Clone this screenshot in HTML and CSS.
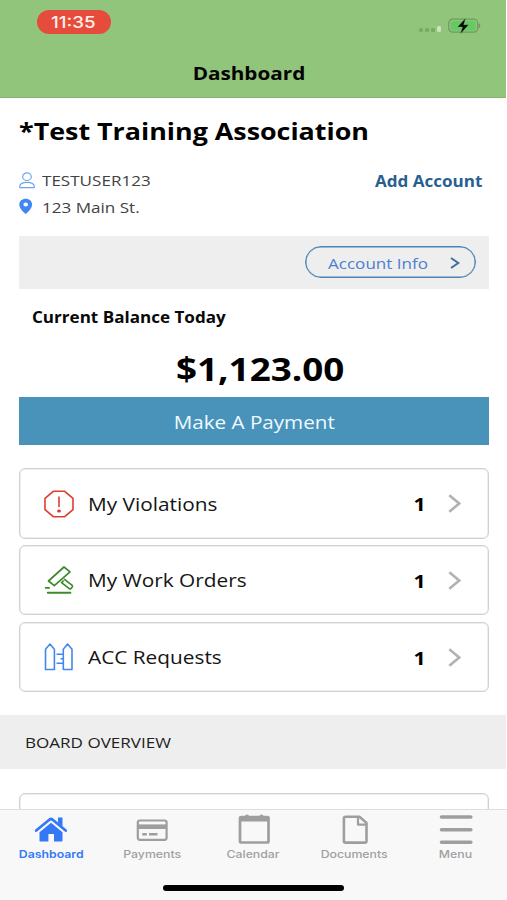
FILE: index.html
```html
<!DOCTYPE html>
<html lang="en">
<head>
<meta charset="utf-8">
<meta name="viewport" content="width=device-width">
<title>Dashboard</title>
<link rel="stylesheet" href="styles.css">
</head>
<body>
<div class="screen">
  <header class="header">
    <div class="status">
      <div class="time"><span class="wide">11:35</span></div>
      <div class="indicators">
        <span class="signal"><i></i><i></i><i></i><i class="on"></i></span>
        <svg class="battery" width="33" height="16" viewBox="0 0 33 16">
          <rect x=".7" y="1.2" width="29" height="13" rx="4" fill="#91c57b" stroke="#6f9a5e" stroke-width="1.2"/>
          <rect x="2.7" y="3" width="25" height="9.5" rx="2.6" fill="#65c966"/>
          <path d="M31 5.8q1.8 2 0 4z" fill="#6f9a5e" stroke="#6f9a5e"/>
          <path d="M17.700 0 9.500 9h5l-2.200 7L20.700 6.700h-5z" fill="#050805" stroke="#91c57b" stroke-width=".3"/>
        </svg>
      </div>
    </div>
    <h1 class="nav-title"><span class="wide mid">Dashboard</span></h1>
  </header>

  <main class="content">
    <h2 class="assoc"><span class="wide">*Test Training Association</span></h2>
    <div class="line">
      <svg class="line-icon" width="16" height="17" viewBox="0 0 16 17" fill="none" stroke="#6ea3f2" stroke-width="1.2"><ellipse cx="8" cy="4.7" rx="4.3" ry="3.8"/><path d="M.8 15.6v-1.3c0-2.500 2.600-4 7.200-4s7.200 1.500 7.200 4v1.300z" stroke-linejoin="round"/></svg>
      <span class="wide slim">TESTUSER123</span>
      <a class="add"><span class="wide slim right">Add Account</span></a>
    </div>
    <div class="line">
      <svg class="line-icon" width="16" height="17" viewBox="0 0 16 17"><path fill="#4287f0" fill-rule="evenodd" d="M6.700.8C3 .8.300 3.200.300 6.500c0 3.800 4 7.500 6.400 9.600 2.400-2.100 6.400-5.800 6.400-9.600C13.100 3.200 10.400.800 6.700.800zM6.700 4.400a2.300 2 0 1 1 0 4 2.300 2 0 1 1 0-4z"/></svg>
      <span class="wide slim">123 Main St.</span>
    </div>

    <div class="info-bar">
      <a class="info-button">
        <span class="wide slim">Account Info</span>
        <svg width="10" height="12" viewBox="0 0 10 12" fill="none" stroke="#3f6d9f" stroke-width="2"><path d="M1 1l7.300 5L1 11"/></svg>
      </a>
    </div>

    <div class="balance-label"><span class="wide slim">Current Balance Today</span></div>
    <div class="balance"><span class="wide mid">$1,123.00</span></div>
    <a class="pay"><span class="wide slim mid">Make A Payment</span></a>

    <div class="cards">
      <div class="card">
        <svg class="card-icon" width="32" height="30" viewBox="0 0 32 30" fill="none" stroke="#e23b30" stroke-width="1.600"><path d="M10.300 2.300h11.400l8.300 7.100v11.200l-8.300 7.100H10.300L2 20.600V9.400z"/><path d="M16 7.500v10.600"/><ellipse cx="16" cy="22" rx="2" ry="1.600" fill="#e23b30" stroke="none"/></svg>
        <span class="wide">My Violations</span><b class="count"><span class="wide right">1</span></b>
        <svg class="chev" width="13" height="19" viewBox="0 0 13 19"><path d="M1.300 1.300l9.900 8.200-9.900 8.200"/></svg>
      </div>
      <div class="card">
        <svg class="card-icon" width="32" height="30" viewBox="0 0 32 30" fill="none" stroke="#3b8a2b" stroke-width="1.700" stroke-linejoin="round" stroke-linecap="round"><path d="M21 2l6 4.800-15.700 13.900-5.800-4.700z"/><path d="M18.600 17.600l7.300 5.800c.7.600 1.600.5 2.200-.1l1-1.100c.6-.7.500-1.400-.2-2l-7.400-5.900M18.600 17.600l1.500-1.500M2.600 22.800h3.600"/><path d="M4.800 27.800h22.600" stroke-width="1.900"/></svg>
        <span class="wide">My Work Orders</span><b class="count"><span class="wide right">1</span></b>
        <svg class="chev" width="13" height="19" viewBox="0 0 13 19"><path d="M1.300 1.300l9.900 8.200-9.900 8.200"/></svg>
      </div>
      <div class="card">
        <svg class="card-icon" width="32" height="30" viewBox="0 0 32 30" fill="none" stroke="#4287f0" stroke-width="1.600" stroke-linejoin="round"><path d="M7 2l4.400 5.200V27.500H2.500V7.200zM24.600 2L29 7.200v20.300h-8.700V7.200zM13.500 12.300h6.800M13.500 21.300h6.800M17.500 16.800h2.800"/></svg>
        <span class="wide">ACC Requests</span><b class="count"><span class="wide right">1</span></b>
        <svg class="chev" width="13" height="19" viewBox="0 0 13 19"><path d="M1.300 1.300l9.900 8.200-9.900 8.200"/></svg>
      </div>
    </div>

    <h3 class="section"><span class="wide slim">BOARD OVERVIEW</span></h3>
    <div class="cards"><div class="card"></div></div>
  </main>

  <footer class="footer">
    <nav class="tabs">
      <a class="tab active">
        <svg width="34" height="32" viewBox="0 0 34 32"><path fill="#3478f6" d="M17 9.800L28.500 19.300v8.200c0 .6-.4 1-1 1H20v-7.600h-5.600v7.600H6.500c-.7 0-1-.4-1-1v-8.200z"/><path d="M2.200 17.500L15.600 6.500q1.400-1 2.800 0L31.700 17.500" fill="none" stroke="#3478f6" stroke-width="2.800" stroke-linecap="round"/><path fill="#3478f6" d="M24 4.500h4.500v9L24 9.800z"/></svg>
        <span class="wide mid">Dashboard</span>
      </a>
      <a class="tab">
        <svg width="34" height="32" viewBox="0 0 34 32"><rect x="2.800" y="7.500" width="28.800" height="19.300" rx="2" fill="none" stroke="#9e9e9e" stroke-width="2.200"/><path d="M3 13.700h28.500" stroke="#9e9e9e" stroke-width="4.600"/><path d="M7.300 21.300h4.500M14 21.300h8.500" stroke="#9e9e9e" stroke-width="2.400"/></svg>
        <span class="wide mid">Payments</span>
      </a>
      <a class="tab">
        <svg width="34" height="32" viewBox="0 0 34 32"><rect x="3" y="4" width="28.500" height="25.500" rx="1.500" fill="none" stroke="#9e9e9e" stroke-width="2.700"/><path d="M2.300 3.500h30v5h-30z" fill="#9e9e9e"/><path d="M10 4v-.5M24.500 4v-.5" stroke="#9e9e9e" stroke-width="4" stroke-linecap="round"/></svg>
        <span class="wide mid">Calendar</span>
      </a>
      <a class="tab">
        <svg width="34" height="32" viewBox="0 0 34 32" fill="none" stroke="#9e9e9e" stroke-width="2.600" stroke-linejoin="round"><path d="M7.500 3.700h14l7 6.200V28c0 1-.6 1.600-1.600 1.600H7.500c-1 0-1.600-.6-1.600-1.600V5.300c0-1 .6-1.600 1.600-1.600z"/><path d="M20 4v7.600h8.200" stroke-width="2.200"/></svg>
        <span class="wide mid">Documents</span>
      </a>
      <a class="tab">
        <svg width="34" height="32" viewBox="0 0 34 32" stroke="#9e9e9e" stroke-width="3.600" stroke-linecap="round"><path d="M2.500 4h29.300M2.500 16.700h29.300M2.500 29.300h29.300"/></svg>
        <span class="wide mid">Menu</span>
      </a>
    </nav>
    <div class="home-bar"></div>
  </footer>
</div>
</body>
</html>
```
FILE: styles.css
```css
* { box-sizing: border-box; }
body { margin: 0; background: #fff; color: #151515; font-family: "Open Sans", sans-serif; }
h1, h2, h3 { margin: 0; }
svg { display: block; flex: none; }

.screen { height: 900px; display: flex; flex-direction: column; overflow: hidden; }

/* Horizontally extended lettering */
.wide { display: inline-block; transform: scaleX(1.15); transform-origin: left center; white-space: nowrap; }
.wide.slim { transform: scaleX(1.115); }
.wide.mid { transform-origin: center; }
.wide.right { transform-origin: right center; }

.header { height: 97.5px; flex: none; margin-right: 1px; background: #91c57b; border-bottom: 1px solid #86b572; }
.status { height: 50px; display: flex; justify-content: space-between; padding: 10px 25px 0 37px; }
.time { width: 74px; height: 24px; border-radius: 12px; background: #e64c3c; color: #fff0ea; font: 500 16.300px/24px Inter, sans-serif; padding-left: 13.5px; }
.indicators { display: flex; align-items: flex-start; gap: 7px; padding-top: 7.500px; }
.signal { display: flex; align-items: flex-end; gap: 2px; height: 14px; }
.signal i { width: 4px; height: 3.500px; border-radius: 1.500px; background: #79a966; }
.signal i.on { height: 6px; background: #c8e5bb; }
.nav-title { height: 47px; margin-left: -8px; text-align: center; color: #030303; font-size: 18px; line-height: 47px; }

.content { flex: 1; min-height: 0; overflow: hidden; }
.assoc { height: 69.500px; padding-left: 19px; color: #000; font-size: 23.350px; line-height: 66px; }
.line { display: flex; align-items: center; height: 26.500px; padding: 0 25px 0 19px; color: #424242; font-size: 15.300px; line-height: 20px; }
.line-icon { margin-right: 6.500px; }
.add { margin-left: auto; padding-top: 1px; color: #285f90; font-weight: 700; }

.info-bar { display: flex; justify-content: flex-end; align-items: center; height: 53.500px; margin: 15.600px 18px 0 19px; padding-right: 13px; background: #eee; }
.info-button { display: flex; justify-content: space-between; align-items: center; width: 171px; height: 32px; padding: 1px 15px 0 22px; border: 1px solid #4b84b5; box-shadow: inset 0 0 0 .5px #4b84b5; border-radius: 16px; color: #4d80cc; font-size: 15.300px; }

.balance-label { height: 57px; padding-left: 31.500px; color: #080808; font-size: 15.300px; font-weight: 700; line-height: 57px; }
.balance { height: 51px; padding-left: 13px; text-align: center; color: #000; font-size: 32px; font-weight: 700; line-height: 45px; }
.pay { display: block; height: 48px; margin: 0 18.500px 0 19px; background: #4993bb; color: #eefaff; text-align: center; font-size: 18.500px; line-height: 49px; }

.cards { display: flex; flex-direction: column; gap: 6.500px; padding: 23.300px 18px 0 19px; }
.card { display: flex; align-items: center; height: 70.300px; padding: 0 27.500px 0 23px; border: 1px solid #d2d2d2; box-shadow: inset 0 0 0 .500px #ddd; border-radius: 6px; font-size: 18.100px; }
.card-icon { margin-right: 12.600px; }
.count { margin-left: auto; margin-right: 22px; color: #000; font-size: 18.500px; }
.chev { fill: none; stroke: #b2b2b2; stroke-width: 2.600px; }
.section { height: 54px; margin: 23px 1px 0 0; padding-left: 25px; background: #eee; color: #222; font-size: 15.300px; font-weight: 400; line-height: 54px; }

.footer { height: 91.500px; flex: none; border-top: 1px solid #dedede; background: #f8f8f8; }
.tabs { display: flex; padding: 3px 0 0 .8px; }
.tab { width: 101.100px; display: flex; flex-direction: column; align-items: center; color: #a0a0a0; font: 500 10.700px/15px Inter, sans-serif; }
.tab.active { color: #3478f6; font-weight: 600; }
.tab .wide { margin-top: 2px; }
.home-bar { width: 181px; height: 5.500px; margin: 23.500px auto 0; border-radius: 3px; background: #000; }
```
